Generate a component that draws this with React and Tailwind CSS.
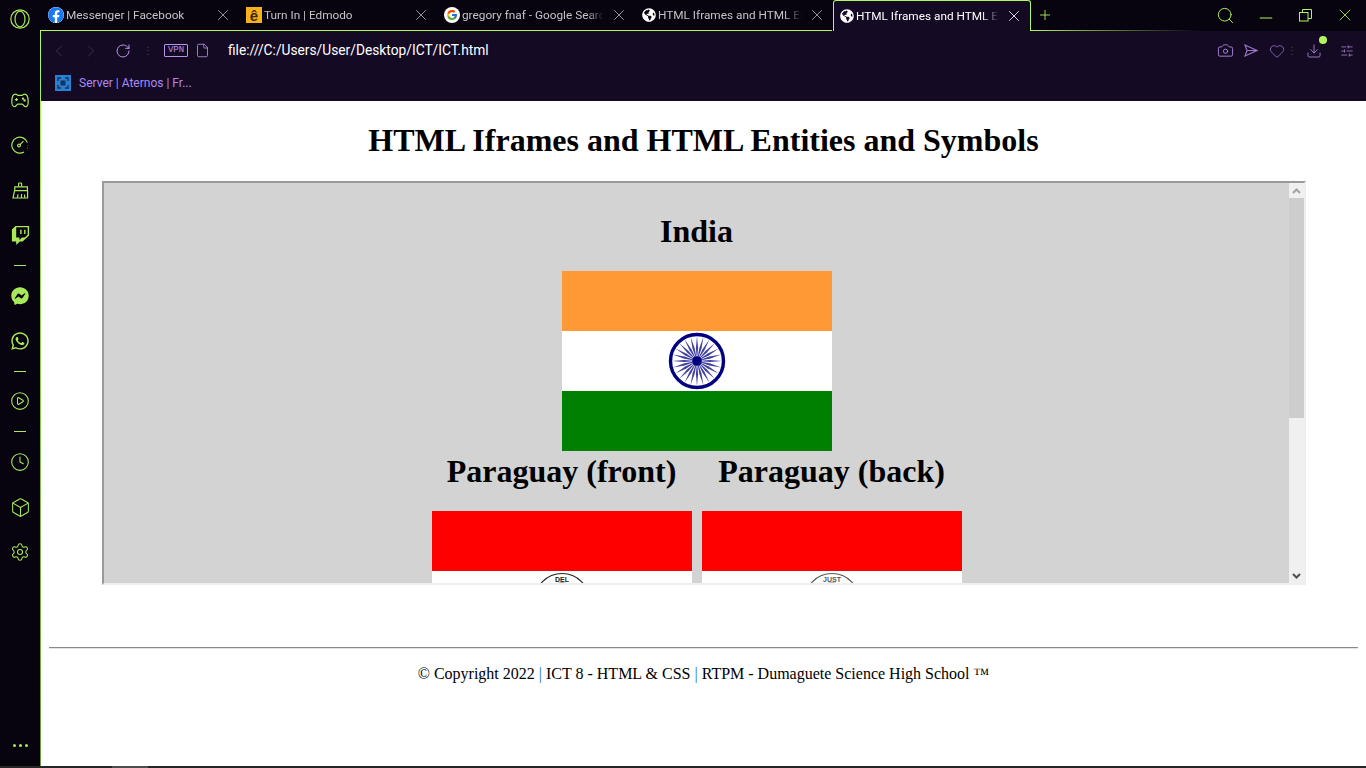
import { CirclePlay, Clock, Box, Settings, ChevronLeft, ChevronRight, RotateCw, File, Camera, Heart, Download, SlidersHorizontal, Search, X, Plus, Minus } from "lucide-react";
import { FaTwitch, FaFacebookMessenger, FaWhatsapp, FaFacebook, FaGlobeAmericas } from "react-icons/fa";
import { FcGoogle } from "react-icons/fc";

const TABS = [
  { title: "Messenger | Facebook", icon: "fb" },
  { title: "Turn In | Edmodo", icon: "edmodo" },
  { title: "gregory fnaf - Google Search", icon: "google" },
  { title: "HTML Iframes and HTML Entities", icon: "globe" },
  { title: "HTML Iframes and HTML Entities", icon: "globe", active: true },
];

function Favicon({ type }) {
  if (type === "fb") {
    return (
      <span className="flex h-4 w-4 shrink-0 items-center justify-center rounded-full bg-white">
        <FaFacebook className="h-4 w-4 text-[#1877f2]" />
      </span>
    );
  }
  if (type === "edmodo") {
    return (
      <span className="flex h-4 w-4 shrink-0 items-end justify-center bg-[#f7b21b] font-['Liberation_Sans',sans-serif] text-[15px] font-bold leading-[15px] text-[#3b2a05]">
        ê
      </span>
    );
  }
  if (type === "google") {
    return (
      <span className="flex h-4 w-4 shrink-0 items-center justify-center rounded-full bg-white">
        <FcGoogle className="h-3 w-3" />
      </span>
    );
  }
  return <FaGlobeAmericas className="h-[14px] w-[14px] shrink-0 text-white" />;
}

function Tab({ title, icon, active }) {
  return (
    <div
      className={`relative flex w-[198px] shrink-0 items-center pr-[7px] ${
        active
          ? "z-10 h-[31px] rounded-t-[3px] border-x border-t border-[#b4f75c] bg-[#150a24] pl-[6px] text-white"
          : "h-[30px] pl-[7px] text-[#c4c4c4]"
      }`}
    >
      <Favicon type={icon} />
      <span
        className="ml-[2px] min-w-0 flex-1 overflow-hidden whitespace-nowrap pt-px text-[11.8px]"
        style={{ maskImage: "linear-gradient(to right, black 88%, transparent 100%)" }}
      >
        {title}
      </span>
      <X className={`ml-[6px] h-[18px] w-[18px] shrink-0 ${active ? "text-white" : "text-[#b0b0b0]"}`} strokeWidth={1.1} />
    </div>
  );
}

function Rail({ children, size = "h-[45px]" }) {
  return <div className={`flex w-full items-center justify-center ${size}`}>{children}</div>;
}

function Separator({ size }) {
  return (
    <Rail size={size}>
      <span className="h-px w-3 bg-[#a9e85a]" />
    </Rail>
  );
}

function GamepadIcon() {
  return (
    <svg width="18" height="15" viewBox="0 0 18 15" fill="none" stroke="currentColor" strokeWidth="1.2">
      <path d="M4.5 1.2C6 1.2 6.5 2.4 7.5 2.4H10.5C11.5 2.4 12 1.2 13.5 1.2C15.6 1.2 17.2 4 17.2 8.4C17.2 11.6 16 13.6 14.5 13.6C12.8 13.6 12.4 11.2 11 11.2H7C5.6 11.2 5.2 13.6 3.5 13.6C2 13.6 0.8 11.6 0.8 8.4C0.8 4 2.4 1.2 4.5 1.2Z" />
      <path d="M4 6.6H7M5.5 5.1V8.1" />
      <circle cx="12" cy="5.6" r="0.6" fill="currentColor" />
      <circle cx="13.6" cy="7.4" r="0.6" fill="currentColor" />
    </svg>
  );
}

function GaugeIcon() {
  return (
    <svg width="18" height="18" viewBox="0 0 18 18" fill="none" stroke="currentColor" strokeWidth="1.2">
      <path d="M16.4 6.6A8 8 0 1 0 13 16" />
      <path d="M16.8 9.2V9.6M16.4 11.8V12.2" />
      <circle cx="8" cy="9.6" r="1.4" />
      <path d="M9 8.6L12.4 5.2" />
    </svg>
  );
}

function BroomIcon() {
  return (
    <svg width="17" height="17" viewBox="0 0 17 17" fill="none" stroke="currentColor" strokeWidth="1.2">
      <path d="M6.6 4.6V1.6C6.6 0.8 9.6 0.8 9.6 1.6V4.6" />
      <path d="M2.8 4.8H15.4V8.6H2.8Z" />
      <path d="M2.6 8.6L1 16H15.6L15.6 8.6" />
      <path d="M5.4 16L6 12.4M9.4 16L9.6 12M12.6 16V12.6" />
    </svg>
  );
}

function Sidebar() {
  return (
    <aside className="flex h-full w-[40px] shrink-0 flex-col items-center bg-[#07030f] text-[#a9e85a]">
      <div className="flex h-[38px] w-full items-center justify-center">
        <svg width="20" height="20" viewBox="0 0 20 20" fill="none" stroke="currentColor" strokeWidth="1.2">
          <circle cx="10" cy="10" r="9.2" />
          <ellipse cx="10" cy="10" rx="5" ry="7.8" />
        </svg>
      </div>
      <div className="h-[39.5px]" />
      <Rail><GamepadIcon /></Rail>
      <Rail><GaugeIcon /></Rail>
      <Rail><BroomIcon /></Rail>
      <Rail><FaTwitch className="h-[19px] w-[19px]" /></Rail>
      <Separator size="h-[16px]" />
      <Rail><FaFacebookMessenger className="h-[18px] w-[18px]" /></Rail>
      <Rail><FaWhatsapp className="h-5 w-5" /></Rail>
      <Separator size="h-[15px]" />
      <Rail><CirclePlay className="h-5 w-5" strokeWidth={1.3} /></Rail>
      <Separator size="h-[16px]" />
      <Rail><Clock className="h-5 w-5" strokeWidth={1.3} /></Rail>
      <Rail><Box className="h-[21px] w-[21px]" strokeWidth={1.2} /></Rail>
      <Rail><Settings className="h-5 w-5" strokeWidth={1.3} /></Rail>
      <div className="mb-[19px] mt-auto flex gap-[3px]">
        <span className="h-[3px] w-[3px] rounded-full bg-[#a9e85a]" />
        <span className="h-[3px] w-[3px] rounded-full bg-[#a9e85a]" />
        <span className="h-[3px] w-[3px] rounded-full bg-[#a9e85a]" />
      </div>
    </aside>
  );
}

function TabBar() {
  return (
    <div className="relative flex h-[31px] shrink-0 items-start bg-[#07030f] pl-px">
      <div className="absolute bottom-0 left-0 h-px w-[792px] bg-[#b4f75c]" />
      <div className="absolute bottom-0 left-[990px] h-px w-[170px] bg-gradient-to-r from-[#b4f75c] to-transparent" />
      {TABS.map((t, i) => (
        <Tab key={i} {...t} />
      ))}
      <Plus className="ml-[6px] mt-[7px] h-4 w-4 text-[#b4f75c]" strokeWidth={1.3} />
      <div className="ml-auto flex h-[30px] items-center text-[#b4f75c]">
        <Search className="mr-[21px] h-[19px] w-[19px]" strokeWidth={1.2} />
        <Minus className="mr-[23px] mt-[5px] h-5 w-5" strokeWidth={1.2} />
        <svg className="mr-[23px]" width="13" height="13" viewBox="0 0 13 13" fill="none" stroke="currentColor">
          <rect x="0.5" y="3.5" width="8.5" height="8.5" />
          <path d="M3.5 3.5V0.5H12.5V9.5H9" />
        </svg>
        <X className="mr-[11px] h-[20px] w-[20px]" strokeWidth={1} />
      </div>
    </div>
  );
}

function Toolbar() {
  return (
    <div className="flex h-[39px] shrink-0 items-center bg-[#150a24] pl-[9px] pr-[12px] text-[#bb92e8]">
      <ChevronLeft className="h-5 w-5 text-[#3d3150]" strokeWidth={1.2} />
      <ChevronRight className="ml-[12px] h-5 w-5 text-[#3d3150]" strokeWidth={1.2} />
      <RotateCw className="ml-[14px] h-4 w-4" strokeWidth={1.5} />
      <span className="ml-[12px] text-[10px] leading-none text-[#4a3d5c]">⋮</span>
      <span className="ml-[11px] flex h-[13px] w-6 items-center justify-center rounded-[1px] border border-[#bb92e8] font-['Liberation_Mono',monospace] text-[9px] leading-none">
        VPN
      </span>
      <File className="ml-[7px] h-[15px] w-[15px]" strokeWidth={1.3} />
      <span className="ml-[18px] font-['Roboto',sans-serif] text-[13.75px] text-white">file:///C:/Users/User/Desktop/ICT/ICT.html</span>
      <div className="ml-auto flex items-center">
        <Camera className="h-[17px] w-[17px]" strokeWidth={1.2} />
        <svg className="ml-[10px]" width="14" height="13" viewBox="0 0 14 13" fill="none" stroke="#9b74c8" strokeWidth="1.1">
          <path d="M1 1L13 6.5L1 12L3 6.5ZM3 6.5H13" />
        </svg>
        <Heart className="ml-[11px] h-4 w-4 text-[#9b74c8]" strokeWidth={1.2} />
        <span className="ml-[2px] text-[10px] leading-none text-[#4a3d5c]">⋮</span>
        <span className="relative ml-[9px]">
          <Download className="h-4 w-4" strokeWidth={1.2} />
          <span className="absolute -right-[5px] -top-[7px] h-2 w-2 rounded-full bg-[#b4f75c]" />
        </span>
        <SlidersHorizontal className="ml-[18px] h-[14px] w-[14px]" strokeWidth={1.2} />
      </div>
    </div>
  );
}

function Bookmarks() {
  return (
    <div className="flex h-[31px] shrink-0 items-start bg-[#150a24] pl-[15px] pt-[5px]">
      <svg width="16" height="16" viewBox="0 0 16 16">
        <rect width="16" height="16" fill="#2a7fd0" />
        <path d="M3 6V3H6M10 3H13V6M13 10V13H10M6 13H3V10" fill="none" stroke="#0f3560" strokeWidth="1.4" />
        <rect x="5.5" y="5.5" width="5" height="5" fill="#0f3560" />
      </svg>
      <span className="ml-2 font-['Roboto',sans-serif] text-[12px] leading-[16px] text-[#a98bf7]">Server | Aternos | Fr...</span>
    </div>
  );
}

function IndiaFlag() {
  const spokes = Array.from({ length: 24 }, (_, i) => i * 15);
  return (
    <div className="flex h-[180px] w-[270px] flex-col">
      <div className="h-[60px] bg-[#ff9933]" />
      <div className="flex h-[60px] items-center justify-center bg-white">
        <svg width="58" height="58" viewBox="0 0 58 58">
          <circle cx="29" cy="29" r="26.5" fill="none" stroke="#000080" strokeWidth="3.4" />
          {spokes.map((a) => (
            <path key={a} d="M29 29L27.9 16L29 4L30.1 16Z" fill="#000080" fillOpacity="0.75" transform={`rotate(${a} 29 29)`} />
          ))}
          <circle cx="29" cy="29" r="4.8" fill="#000080" />
        </svg>
      </div>
      <div className="h-[60px] bg-[#008000]" />
    </div>
  );
}

function ParaguayFlag({ label, tone }) {
  return (
    <div className="flex h-[180px] w-[260px] flex-col">
      <div className="h-[60px] shrink-0 bg-[#ff0000]" />
      <div className="flex h-[60px] shrink-0 items-center justify-center bg-white">
        <svg width="58" height="58" viewBox="0 0 58 58" className="mt-[-1px]">
          <circle cx="29" cy="29" r="27.5" fill="none" stroke={tone} strokeWidth="1.2" />
          <circle cx="29" cy="29" r="18" fill="none" stroke={tone} strokeWidth="1" />
          <text x="29" y="10" textAnchor="middle" fontSize="7" fontWeight="700" fontFamily="Liberation Sans, sans-serif" fill={tone}>
            {label}
          </text>
        </svg>
      </div>
      <div className="h-[60px] shrink-0 bg-[#0038a8]" />
    </div>
  );
}

function IframeBox() {
  return (
    <div className="ml-[61px] flex h-[404px] w-[1204px] border-2 border-b-[#eeeeee] border-l-[#9a9a9a] border-r-[#eeeeee] border-t-[#9a9a9a] bg-[#d3d3d3]">
      <div className="min-w-0 flex-1 overflow-hidden">
        <div className="flex flex-col items-center">
          <h2 className="mt-[30px] text-[32px] font-bold leading-[37px] text-black">India</h2>
          <div className="mt-[21px]">
            <IndiaFlag />
          </div>
          <div className="mt-[2px] flex gap-[10px]">
            <h2 className="w-[260px] whitespace-nowrap text-center text-[32px] font-bold leading-[37px] text-black">Paraguay (front)</h2>
            <h2 className="w-[260px] whitespace-nowrap text-center text-[32px] font-bold leading-[37px] text-black">Paraguay (back)</h2>
          </div>
          <div className="mt-[21px] flex gap-[10px]">
            <ParaguayFlag label="DEL" tone="#222222" />
            <ParaguayFlag label="JUST" tone="#555555" />
          </div>
        </div>
      </div>
      <div className="flex w-[15px] shrink-0 flex-col bg-[#f0f0f0]">
        <div className="flex h-[15px] shrink-0 items-center justify-center">
          <svg width="9" height="6" viewBox="0 0 9 6" fill="none" stroke="#a3a3a3" strokeWidth="2">
            <path d="M1 5L4.5 1.5L8 5" />
          </svg>
        </div>
        <div className="h-[220px] shrink-0 bg-[#cdcdcd]" />
        <div className="mt-auto flex h-[15px] shrink-0 items-center justify-center">
          <svg width="9" height="6" viewBox="0 0 9 6" fill="none" stroke="#505050" strokeWidth="2">
            <path d="M1 1L4.5 4.5L8 1" />
          </svg>
        </div>
      </div>
    </div>
  );
}

export default function App() {
  return (
    <div className="flex h-screen w-full flex-col overflow-hidden bg-[#07030f] font-['Roboto',sans-serif]">
      <div className="flex min-h-0 flex-1">
        <Sidebar />
        <div className="relative flex min-w-0 flex-1 flex-col">
          {/* lime edge that fades toward the bottom of the window */}
          <div className="absolute bottom-0 left-0 top-[30px] z-20 w-px bg-gradient-to-b from-[#b4f75c] to-[#6c9a3c]" />
          <TabBar />
          <Toolbar />
          <Bookmarks />
          <main className="min-h-0 flex-1 bg-white pl-px font-['Liberation_Serif',serif] text-black">
            <h1 className="mt-[21px] text-center text-[32px] font-bold leading-[37px]">
              HTML Iframes and HTML Entities and Symbols
            </h1>
            <div className="mt-[22px]">
              <IframeBox />
            </div>
            <hr className="ml-[8px] mr-2 mt-[62px] h-[2px] border-0 border-t border-[#8a8a8a] bg-[#e4e4e4]" />
            <p className="mt-[16px] text-center text-[16px] leading-[18px]">
              © Copyright 2022 <span className="text-[#1a6fd0]">|</span> ICT 8 - HTML &amp; CSS <span className="text-[#1a6fd0]">|</span> RTPM - Dumaguete Science High School ™
            </p>
          </main>
        </div>
      </div>
      {/* taskbar sliver along the bottom edge */}
      <div className="h-[2px] shrink-0 bg-[#262626]">
        <div className="ml-[112px] h-full w-[36px] bg-[#4d4d4d]" />
      </div>
    </div>
  );
}
